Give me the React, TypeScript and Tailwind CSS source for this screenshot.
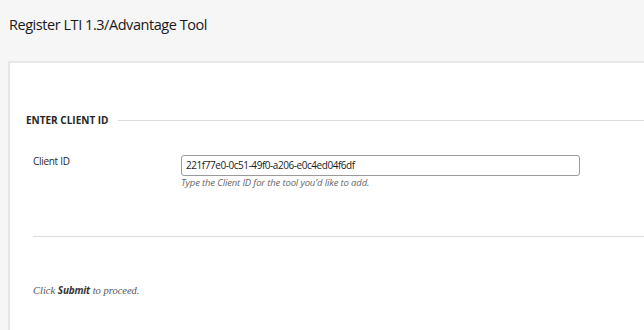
import React from 'react';

const sans = { fontFamily: '"Open Sans", "Liberation Sans", sans-serif' };

export default function App() {
    return (
        <div className="w-[644px] h-[330px] overflow-hidden bg-[#f6f6f6] text-[#262626]" style={sans}>
            {/* Page title */}
            <div className="h-[61px] pl-[9px] pt-[14px]">
                <h1 className="text-[14.5px] leading-[22px] tracking-[-0.45px] font-normal text-[#1a1a1a]">Register LTI 1.3/Advantage Tool</h1>
            </div>

            {/* Panel */}
            <div className="ml-[8px] h-[269px] bg-white border-t-2 border-l-2 border-[#e6e6e6]">
                {/* Section heading */}
                <div className="flex items-center pl-[16px] pt-[50px]">
                    <h2 className="text-[10px] leading-[14px] font-bold uppercase text-[#262626]">Enter Client ID</h2>
                    <div className="flex-1 ml-[9px] h-px bg-[#dcdcdc]" />
                </div>

                {/* Field row */}
                <div className="flex pl-[23px] pt-[28px]">
                    <label className="w-[148px] text-[10px] leading-[12px] tracking-[-0.3px] text-[#1f1f1f]">Client ID</label>
                    <div className="flex flex-col">
                        <div className="w-[399px] h-[21px] flex items-center px-[4px] border border-[#9a9a9a] rounded-[3px] text-[10px] tracking-[-0.45px] text-[#1a1a1a]">
                            221f77e0-0c51-49f0-a206-e0c4ed04f6df
                        </div>
                        <p className="text-[9.5px] leading-[14px] tracking-[-0.15px] italic text-[#666]">Type the Client ID for the tool you'd like to add.</p>
                    </div>
                </div>

                {/* Divider */}
                <div className="ml-[23px] mt-[46px] h-px bg-[#dcdcdc]" />

                {/* Footer note */}
                <p className="pl-[23px] mt-[45px] text-[10.5px] leading-[16px] italic text-[#555]" style={{ fontFamily: '"Liberation Serif", serif' }}>
                    Click <b className="font-bold text-[10px] tracking-[-0.2px] text-[#333]" style={sans}>Submit</b> to proceed.
                </p>
            </div>
        </div>
    );
}
